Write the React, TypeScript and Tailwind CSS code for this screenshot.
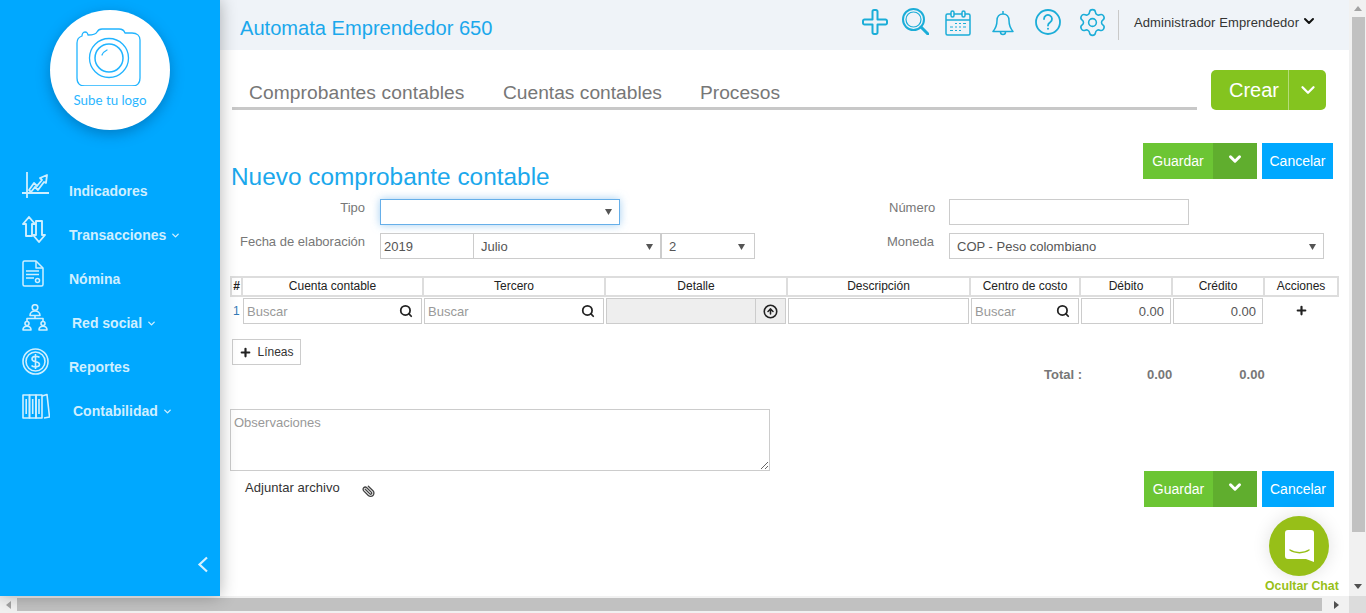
import { ChevronDown, CircleArrowUp, Paperclip, Plus, Search, Settings } from 'lucide-react';

const font = { fontFamily: '"Liberation Sans", Arial, sans-serif' };

const IconPlus = () => (
  <svg width="26" height="26" viewBox="0 0 26 26" fill="none" stroke="#1badd8" strokeWidth="2" strokeLinejoin="round">
    <path d="M10.500 2.500A1.500 1.500 0 0 1 12 1h2a1.500 1.500 0 0 1 1.500 1.500v8h8A1.500 1.500 0 0 1 25 12v2a1.500 1.500 0 0 1-1.500 1.500h-8v8A1.500 1.500 0 0 1 14 25h-2a1.500 1.500 0 0 1-1.500-1.500v-8h-8A1.500 1.500 0 0 1 1 14v-2a1.500 1.500 0 0 1 1.500-1.500h8z" />
  </svg>
);

const IconSearch = () => (
  <svg width="27" height="27" viewBox="0 0 27 27" fill="none" stroke="#1badd8">
    <circle cx="11.500" cy="11.500" r="10.500" strokeWidth="2" />
    <circle cx="11.500" cy="11.500" r="7.500" strokeWidth="1.200" />
    <path d="M19 19l7 7" strokeWidth="3" strokeLinecap="round" />
  </svg>
);

const IconCalendar = () => (
  <svg width="26" height="26" viewBox="0 0 26 26" fill="none" stroke="#1badd8" strokeWidth="1.500">
    <rect x="1" y="4" width="24" height="21" rx="1.500" />
    <path d="M1 10h24" />
    <rect x="6" y="1" width="3" height="6" rx="1.500" fill="#eff3f8" />
    <rect x="17" y="1" width="3" height="6" rx="1.500" fill="#eff3f8" />
    <path d="M10 13.500h2M14 13.500h2M18 13.500h3M5 17h3M10 17h2M14 17h2M18 17h3M5 20.500h3M10 20.500h2M14 20.500h2" strokeWidth="1.200" />
  </svg>
);

const IconBell = () => (
  <svg width="22" height="26" viewBox="0 0 22 26" fill="none" stroke="#1badd8" strokeWidth="1.500" strokeLinejoin="round">
    <path d="M11 4c-3.800 0-6 2.800-6 6.500 0 5-1.500 8-4 11h20c-2.500-3-4-6-4-11C17 6.800 14.800 4 11 4z" />
    <path d="M11 1v3M8.500 22a2.500 2.500 0 0 0 5 0" />
  </svg>
);

const IconHelp = () => (
  <svg width="26" height="26" viewBox="0 0 26 26" fill="none" stroke="#1badd8" strokeWidth="1.800">
    <circle cx="13" cy="13" r="12" />
    <path d="M9 10a4 4 0 1 1 6.200 3.300c-1.400.9-2.200 1.600-2.200 3.200" strokeLinecap="round" />
    <circle cx="13" cy="19.800" r="1" fill="#1badd8" stroke="none" />
  </svg>
);

const chartIcon = (
  <svg width="28" height="27" viewBox="0 0 28 27" fill="none" stroke="#cfefff" strokeWidth="1.800" strokeLinejoin="round">
    <path d="M5 0v26M0 21h27" />
    <path d="M7 18l5-7 3 3 5-6-2-2 7-3-1 8-2-1-6 8-3-3-4 5z" />
  </svg>
);

const arrowsIcon = (
  <svg width="24" height="27" viewBox="0 0 24 27" fill="none" stroke="#cfefff" strokeWidth="1.900" strokeLinejoin="round">
    <path d="M7 1L1 8h3v12h6V8h3z" />
    <path d="M17 26l6-7h-3V5h-6v14h-3z" />
  </svg>
);

const docIcon = (
  <svg width="22" height="27" viewBox="0 0 22 27" fill="none" stroke="#cfefff" strokeWidth="1.500" strokeLinejoin="round">
    <path d="M14 1H2.500A1.500 1.500 0 0 0 1 2.500v22A1.500 1.500 0 0 0 2.500 26h17a1.500 1.500 0 0 0 1.500-1.500V8z" />
    <path d="M14 1v7h7M4 11h13M4 14.500h13M4 18h8" />
    <circle cx="15.500" cy="20.500" r="2" />
  </svg>
);

const networkIcon = (
  <svg width="26" height="27" viewBox="0 0 26 27" fill="none" stroke="#cfefff" strokeWidth="1.600" strokeLinejoin="round">
    <circle cx="13" cy="3.500" r="2.800" />
    <path d="M8 11.500c0-6 10-6 10 0z" />
    <path d="M13 11.500v3M5 18v-3.500h16V18" />
    <circle cx="5" cy="19.500" r="2" />
    <path d="M1 26c0-5 8-5 8 0z" />
    <circle cx="21" cy="19.500" r="2" />
    <path d="M17 26c0-5 8-5 8 0z" />
  </svg>
);

const coinIcon = (
  <svg width="27" height="27" viewBox="0 0 27 27" fill="none" stroke="#cfefff" strokeWidth="1.600">
    <circle cx="13.500" cy="13.500" r="12.500" />
    <circle cx="13.500" cy="13.500" r="9.500" />
    <path d="M17.500 9.500c-1-1.500-7.500-2-7.500 1.500 0 4 7.500 1.500 7.500 5.500 0 3-6.500 3-8 1M13.500 6v15" />
  </svg>
);

const booksIcon = (
  <svg width="28" height="26" viewBox="0 0 28 26" fill="none" stroke="#cfefff" strokeWidth="1.600" strokeLinejoin="round">
    <rect x="1" y="2" width="6.500" height="23" />
    <rect x="7.500" y="2" width="6.500" height="23" />
    <rect x="14" y="2" width="6" height="23" />
    <path d="M20 3l5-1.500 2.500 22.500-5.500 1" />
    <path d="M4.200 6v15M10.700 6v15M17 6v15" />
  </svg>
);

const menu = [
  { label: 'Indicadores', icon: chartIcon, left: 'left-[69px]', caret: false },
  { label: 'Transacciones', icon: arrowsIcon, left: 'left-[69px]', caret: true },
  { label: 'Nómina', icon: docIcon, left: 'left-[69px]', caret: false },
  { label: 'Red social', icon: networkIcon, left: 'left-[72px]', caret: true },
  { label: 'Reportes', icon: coinIcon, left: 'left-[69px]', caret: false },
  { label: 'Contabilidad', icon: booksIcon, left: 'left-[73px]', caret: true },
];

const Sidebar = () => (
  <aside className="relative z-10 flex h-full w-[220px] shrink-0 flex-col bg-[#00a8ff] shadow-[0_0_16px_rgba(0,0,0,0.3)]">
    <div className="ml-[50px] mt-[10px] flex h-[120px] w-[120px] flex-col items-center rounded-full bg-white pt-[18px] shadow-[0_4px_14px_rgba(0,60,110,0.4)]">
      <svg width="68" height="58" viewBox="0 0 68 58" fill="none" stroke="#21b4ff" strokeWidth="1.300" strokeLinejoin="round">
        <path d="M6 8c0-2 1-4 3-4s3 2 3 3c6 0 8-1 9-3 1-2 3-3 5-3h17c3 0 5 1 6 4h7c5 0 8 3 8 7v38c0 5-3 8-8 8H9c-5 0-8-3-8-8V15c0-3 2-6 5-7z" />
        <circle cx="33" cy="30" r="19.500" />
        <circle cx="33" cy="30" r="14" strokeWidth="1.500" />
        <path d="M26 27c1-3 3-4 5-5" strokeLinecap="round" />
      </svg>
      <span className="mt-[6px] text-[13.300px] leading-[16px] text-[#2bb6ff]" style={{ fontFamily: 'Lato, sans-serif' }}>
        Sube tu logo
      </span>
    </div>
    <nav className="mt-[42px] flex flex-col pl-[22px]">
      {menu.map((item) => (
        <div key={item.label} className="h-[44px]">
          <div className="flex h-[27px] w-[30px] items-center">{item.icon}</div>
          <div className={`absolute ${item.left} mt-[-18px] flex items-center gap-[4px] text-[14px] font-bold leading-[20px] text-[#cfefff]`}>
            {item.label}
            {item.caret && <ChevronDown size={11} strokeWidth={3} />}
          </div>
        </div>
      ))}
    </nav>
    <svg className="absolute bottom-[23px] left-[197px]" width="12" height="17" viewBox="0 0 12 17" fill="none" stroke="#d5f1ff" strokeWidth="2.200">
      <path d="M10 1.500L2.500 8.500 10 15.500" />
    </svg>
  </aside>
);

const Header = () => (
  <header className="flex h-[50px] items-start bg-[#eff3f8] pl-[20px]">
    <h1 className="mt-[16px] w-[622px] whitespace-nowrap text-[20.100px] leading-[24px] text-[#1ba8ec]">Automata Emprendedor 650</h1>
    <div className="mt-[9px]"><IconPlus /></div>
    <div className="ml-[14px] mt-[8px]"><IconSearch /></div>
    <div className="ml-[16px] mt-[10px]"><IconCalendar /></div>
    <div className="ml-[21px] mt-[10px]"><IconBell /></div>
    <div className="ml-[21px] mt-[9px]"><IconHelp /></div>
    <div className="ml-[16px] mt-[7px] text-[#1badd8]"><Settings size={31} strokeWidth={1.200} /></div>
    <div className="ml-[10px] mt-[10px] h-[30px] w-px bg-[#c9c9c9]" />
    <span className="ml-[15px] mt-[14px] text-[13px] leading-[17px] tracking-[0.1px] text-[#333]">Administrador Emprendedor</span>
    <ChevronDown className="ml-[2px] mt-[13px] text-[#111]" size={16} strokeWidth={3} />
  </header>
);

const Tabs = () => (
  <div className="mt-[20px] flex h-[40px] pl-[12px]">
    <div className="flex h-[40px] w-[965px] items-end gap-[38px] border-b-[3px] border-[#c8c8c8] pb-[1px] pl-[17px] text-[19.200px] leading-[26px] text-[#777]">
      <span className="w-[216px] whitespace-nowrap tracking-[0.1px]">Comprobantes contables</span>
      <span className="w-[159px] whitespace-nowrap">Cuentas contables</span>
      <span>Procesos</span>
    </div>
    <div className="ml-[14px] flex h-[40px] w-[115px] rounded-[5px] bg-[#84c41f] text-white">
      <span className="flex w-[77px] items-center justify-end pr-[9px] text-[20px]">Crear</span>
      <span className="flex flex-1 items-center justify-center border-l border-[#b5dc7a]">
        <ChevronDown size={22} strokeWidth={2.500} />
      </span>
    </div>
  </div>
);

const ActionButtons = ({ guardar, cancelar }: { guardar: string; cancelar: string }) => (
  <div className="flex h-[36px] gap-[5px] text-[14px] text-white">
    <div className={`flex ${guardar} bg-[#6cc534]`}>
      <span className="flex flex-1 items-center justify-center">Guardar</span>
      <span className="flex w-[44px] items-start justify-center bg-[#60ae2e] pt-[7px]">
        <ChevronDown size={18} strokeWidth={4} />
      </span>
    </div>
    <div className={`flex ${cancelar} items-center justify-center bg-[#00a8ff]`}>Cancelar</div>
  </div>
);

const Caret = () => (
  <svg width="7" height="6" viewBox="0 0 7 6" fill="#555"><path d="M0 0h7L3.500 6z" /></svg>
);

const box = 'h-[26px] border border-[#ccc] bg-white text-[13px] text-[#555]';

const FormRows = () => (
  <div className="mt-[9px] flex flex-col gap-[8px] pl-[10px] text-[13px] text-[#777]">
    <div className="flex h-[26px]">
      <label className="w-[135px] pt-[1px] text-right leading-[16px]">Tipo</label>
      <div className="ml-[15px] flex h-[26px] w-[240px] items-center justify-end border border-[#66afe9] bg-white pr-[7px] shadow-[0_0_8px_rgba(102,175,233,0.6)]">
        <Caret />
      </div>
      <label className="ml-[269px] w-[45px] whitespace-nowrap pt-[1px] text-right leading-[16px]">Número</label>
      <input className={`ml-[15px] w-[240px] ${box}`} />
    </div>
    <div className="flex h-[26px]">
      <label className="w-[135px] whitespace-nowrap pt-[1px] text-right leading-[16px]">Fecha de elaboración</label>
      <div className={`ml-[15px] flex w-[94px] items-center pl-[3px] pt-px ${box}`}>2019</div>
      <div className={`ml-[-1px] flex w-[188px] items-center justify-between pl-[7px] pr-[7px] pt-px ${box}`}>Julio<Caret /></div>
      <div className={`flex w-[94px] items-center justify-between pl-[7px] pr-[9px] pt-px ${box}`}>2<Caret /></div>
      <label className="ml-[131px] w-[48px] pt-[1px] text-right leading-[16px]">Moneda</label>
      <div className={`ml-[15px] flex w-[375px] items-center justify-between pl-[7px] pr-[7px] pt-px ${box}`}>COP - Peso colombiano<Caret /></div>
    </div>
  </div>
);

const columns = [
  { label: '#', cls: 'w-[11px] font-bold' },
  { label: 'Cuenta contable', cls: 'w-[181px]' },
  { label: 'Tercero', cls: 'w-[182px]' },
  { label: 'Detalle', cls: 'w-[182px]' },
  { label: 'Descripción', cls: 'w-[183px]' },
  { label: 'Centro de costo', cls: 'w-[110px]' },
  { label: 'Débito', cls: 'w-[92px]' },
  { label: 'Crédito', cls: 'w-[92px]' },
  { label: 'Acciones', cls: 'w-[74px]' },
];

const SearchInput = ({ width }: { width: string }) => (
  <div className={`mr-[2px] flex h-[26px] ${width} items-center border border-[#ccc] pr-[8px]`}>
    <input placeholder="Buscar" className="w-full min-w-0 pl-[3px] pt-px text-[13px] outline-none placeholder:text-[#999]" />
    <Search className="shrink-0 text-[#222]" size={14} strokeWidth={3} />
  </div>
);

const LinesTable = () => (
  <div className="ml-[10px] mt-[17px] w-[1109px] text-[12px]">
    <div className="flex h-[21px] border-y-2 border-l-2 border-[#ddd] leading-[17px] text-[#222]">
      {columns.map((c) => (
        <div key={c.label} className={`${c.cls} border-r-2 border-[#ddd] text-center`}>{c.label}</div>
      ))}
    </div>
    <div className="mt-px flex h-[26px] text-[13px] text-[#555]">
      <span className="w-[13px] pl-[3px] pt-[4px] text-[12px] text-[#337ab7]">1</span>
      <SearchInput width="w-[179px]" />
      <SearchInput width="w-[180px]" />
      <div className="mr-[2px] flex h-[26px] w-[180px] border border-[#ccc]">
        <div className="w-[148px] bg-[#eee]" />
        <div className="flex flex-1 items-center justify-center border-l border-[#ccc] bg-[#eee]">
          <CircleArrowUp className="text-[#222]" size={15} strokeWidth={2.500} />
        </div>
      </div>
      <input className={`mr-[2px] w-[181px] ${box}`} />
      <SearchInput width="w-[108px]" />
      <input readOnly value="0.00" className={`mr-[2px] w-[90px] pr-[6px] text-right ${box}`} />
      <input readOnly value="0.00" className={`w-[90px] pr-[6px] text-right ${box}`} />
      <Plus className="ml-[32px] mt-[6px] text-[#222]" size={13} strokeWidth={4} />
    </div>
  </div>
);

const Main = () => (
  <main className="relative flex h-full w-[1129px] shrink-0 flex-col bg-white">
    <Header />
    <Tabs />
    <div className="mt-[33px] flex h-[47px] justify-between pl-[11px] pr-[16px]">
      <h2 className="mb-[-1px] self-end whitespace-nowrap text-[24.400px] leading-[28px] text-[#1ba8ec]">Nuevo comprobante contable</h2>
      <ActionButtons guardar="w-[114px]" cancelar="w-[71px]" />
    </div>
    <FormRows />
    <LinesTable />
    <button className="ml-[12px] mt-[15px] flex h-[26px] w-[69px] items-center justify-center gap-[5px] border border-[#ccc] bg-white text-[12px] text-[#333]">
      <Plus size={13} strokeWidth={4} className="text-[#222]" />
      Líneas
    </button>
    <div className="mt-[1px] flex h-[18px] items-center text-[13px] font-bold text-[#777]">
      <span className="ml-[824px]">Total :</span>
      <span className="ml-[65px]">0.00</span>
      <span className="ml-[67px]">0.00</span>
    </div>
    <div className="mt-[25px] flex justify-between pl-[10px] pr-[15px]">
      <div>
        <textarea
          placeholder="Observaciones"
          className="block h-[62px] w-[540px] border border-[#ccc] px-[3px] py-[5px] text-[13px] leading-[16px] outline-none placeholder:text-[#999]"
        />
        <div className="mt-[9px] flex items-start pl-[15px] text-[13px] leading-[16px] tracking-[0.05px] text-[#333]">
          <span>Adjuntar archivo</span>
          <Paperclip className="ml-[22px] mt-[5px] -rotate-90 text-[#444]" size={13} strokeWidth={2.500} />
        </div>
      </div>
      <div className="mt-[62px]">
        <ActionButtons guardar="w-[113px]" cancelar="w-[72px]" />
      </div>
    </div>
    <div className="absolute left-[1045px] top-[516px] flex w-[74px] flex-col items-start">
      <div className="ml-[4px] flex h-[60px] w-[60px] items-center justify-center rounded-full bg-[#97bf18] shadow-[0_0_18px_rgba(0,0,0,0.12)]">
        <svg width="29" height="32" viewBox="0 0 29 32" fill="none">
          <path d="M3 0h23a3 3 0 0 1 3 3v29l-8-3H3a3 3 0 0 1-3-3V3a3 3 0 0 1 3-3z" fill="#fff" />
          <path d="M5 20c5 3.500 14 3.500 19 0" stroke="#97bf18" strokeWidth="1.500" strokeLinecap="round" />
        </svg>
      </div>
      <span className="mt-[3px] whitespace-nowrap text-[12.300px] font-bold leading-[14px] text-[#97bf18]">Ocultar Chat</span>
    </div>
  </main>
);

const App = () => (
  <div className="flex h-[613px] w-[1366px] flex-col overflow-hidden bg-[#f1f1f1]" style={font}>
    <div className="flex h-[596px]">
      <Sidebar />
      <Main />
      <div className="flex w-[17px] shrink-0 flex-col items-center">
        <svg className="mt-[6px]" width="8" height="5" viewBox="0 0 8 5" fill="#a3a3a3"><path d="M4 0l4 5H0z" /></svg>
        <div className="ml-[1px] mt-[6px] h-[515px] w-[13px] bg-[#c1c1c1]" />
        <svg className="mt-[52px]" width="8" height="5" viewBox="0 0 8 5" fill="#505050"><path d="M0 0h8L4 5z" /></svg>
      </div>
    </div>
    <div className="flex h-[17px] items-center">
      <svg className="ml-[6px]" width="5" height="8" viewBox="0 0 5 8" fill="#a3a3a3"><path d="M5 0v8L0 4z" /></svg>
      <div className="ml-[6px] h-[13px] w-[1310px] bg-[#c1c1c1]" />
      <svg className="ml-[12px]" width="5" height="8" viewBox="0 0 5 8" fill="#505050"><path d="M0 0l5 4-5 4z" /></svg>
      <div className="ml-[10px] h-full w-[17px] bg-[#dcdcdc]" />
    </div>
  </div>
);

export default App;
